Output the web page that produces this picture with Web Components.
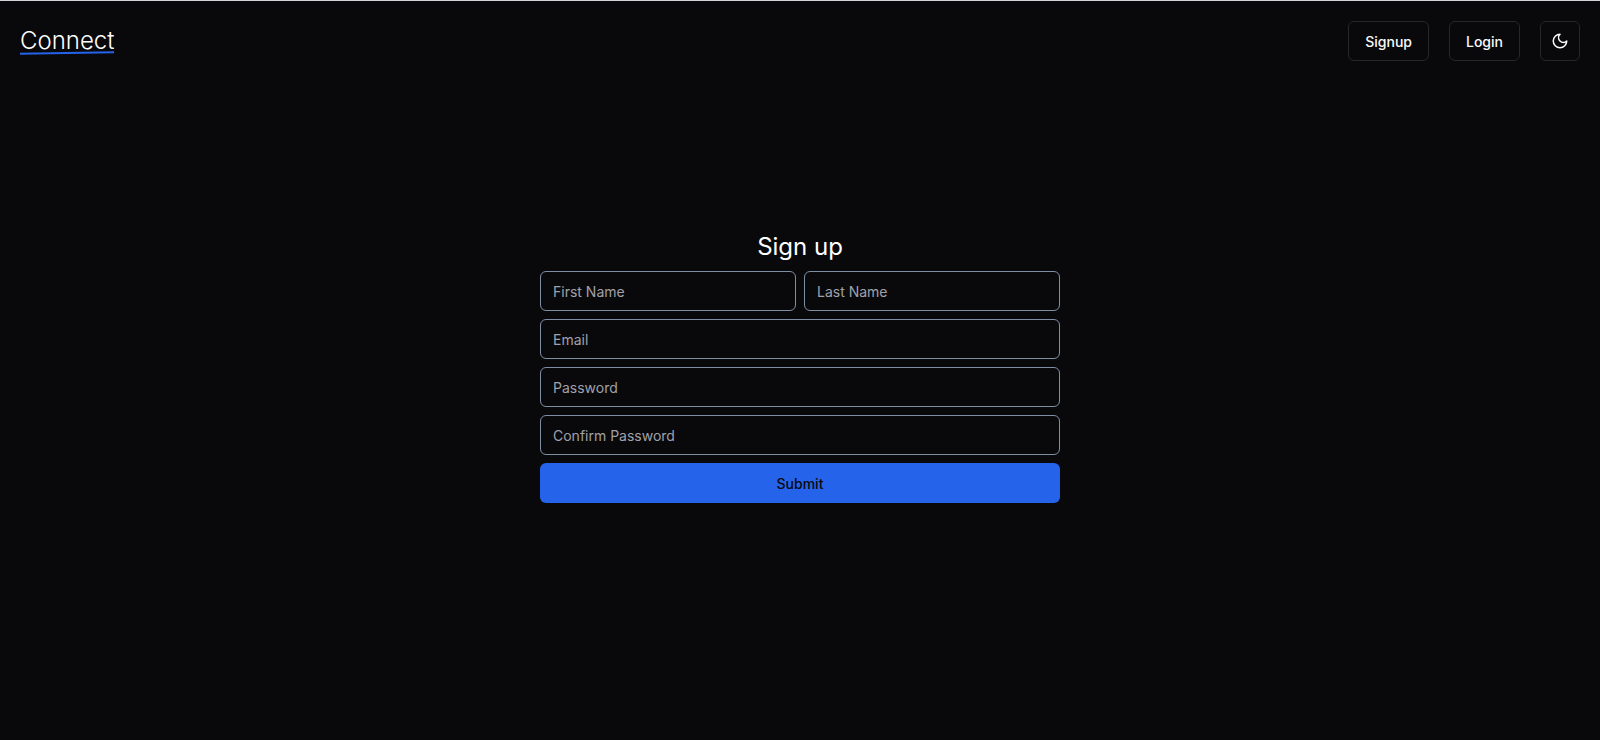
<!DOCTYPE html>
<html lang="en">
<head>
<meta charset="utf-8">
<title>Connect</title>
<style>
  html, body { margin: 0; height: 100%; background: #09090b; }
  body { font-family: Inter, "Liberation Sans", sans-serif; color: #fafafa; border-top: 1px solid #d4d4d8; box-sizing: border-box; overflow: hidden; }
</style>
</head>
<body>
<site-nav>
  <nav-button slot="actions">Signup</nav-button>
  <nav-button slot="actions">Login</nav-button>
  <theme-toggle slot="actions"></theme-toggle>
</site-nav>
<signup-form>
  <form-field slot="names" placeholder="First Name"></form-field>
  <form-field slot="names" placeholder="Last Name"></form-field>
  <form-field placeholder="Email"></form-field>
  <form-field placeholder="Password"></form-field>
  <form-field placeholder="Confirm Password"></form-field>
</signup-form>

<script>
// Barra superior: logo a la izquierda, acciones a la derecha
class SiteNav extends HTMLElement {
  constructor() {
    super();
    this.attachShadow({ mode: 'open' }).innerHTML = `
      <style>
        :host { display: flex; justify-content: space-between; align-items: center; padding: 20px; }
        .logo { position: relative; font-size: 24px; line-height: 32px; font-weight: 300; color: #fff; }
        .logo i { position: absolute; left: 0; right: 0; bottom: 3px; height: 2px; background: #2563eb; transform: rotate(-1deg); }
        .actions { display: flex; gap: 20px; }
      </style>
      <div class="logo">Connect<i></i></div>
      <div class="actions"><slot name="actions"></slot></div>`;
  }
}

class NavButton extends HTMLElement {
  constructor() {
    super();
    this.attachShadow({ mode: 'open' }).innerHTML = `
      <style>
        :host { display: block; }
        button { height: 40px; padding: 0 16px; font: 500 14px Inter, "Liberation Sans", sans-serif; color: #fafafa; background: transparent; border: 1px solid #27272a; border-radius: 6px; }
      </style>
      <button type="button"><slot></slot></button>`;
  }
}

class ThemeToggle extends HTMLElement {
  constructor() {
    super();
    this.attachShadow({ mode: 'open' }).innerHTML = `
      <style>
        :host { display: block; }
        button { display: flex; align-items: center; justify-content: center; width: 40px; height: 40px; padding: 0; background: transparent; border: 1px solid #27272a; border-radius: 6px; color: #fafafa; }
      </style>
      <button type="button" aria-label="Toggle theme">
        <svg width="18" height="18" viewBox="0 0 24 24" fill="none" stroke="currentColor" stroke-width="2" stroke-linecap="round" stroke-linejoin="round"><path d="M12 3a6 6 0 0 0 9 9 9 9 0 1 1-9-9Z"/></svg>
      </button>`;
  }
}

class FormField extends HTMLElement {
  constructor() {
    super();
    this.attachShadow({ mode: 'open' }).innerHTML = `
      <style>
        :host { display: block; flex: 1; }
        input { display: block; box-sizing: border-box; width: 100%; height: 40px; padding: 0 12px; font: 400 14px Inter, "Liberation Sans", sans-serif; color: #fafafa; background: transparent; border: 1px solid #7f8ea3; border-radius: 6px; outline: none; }
        input::placeholder { color: #a1a1aa; opacity: 1; }
      </style>
      <input>`;
    this.shadowRoot.querySelector('input').placeholder = this.getAttribute('placeholder') || '';
  }
}

class SignupForm extends HTMLElement {
  constructor() {
    super();
    this.attachShadow({ mode: 'open' }).innerHTML = `
      <style>
        :host { display: flex; flex-direction: column; gap: 8px; width: 520px; margin: 150px auto 0; }
        h1 { margin: 0; font-size: 24px; line-height: 32px; font-weight: 400; text-align: center; color: #fff; }
        .names { display: flex; gap: 8px; }
        .stack { display: contents; }
        button { height: 40px; font: 500 14px Inter, "Liberation Sans", sans-serif; color: #09090b; background: #2563eb; border: 0; border-radius: 6px; }
      </style>
      <h1>Sign up</h1>
      <div class="names"><slot name="names"></slot></div>
      <slot class="stack"></slot>
      <button type="button">Submit</button>`;
  }
}

customElements.define('site-nav', SiteNav);
customElements.define('nav-button', NavButton);
customElements.define('theme-toggle', ThemeToggle);
customElements.define('form-field', FormField);
customElements.define('signup-form', SignupForm);
</script>
</body>
</html>
